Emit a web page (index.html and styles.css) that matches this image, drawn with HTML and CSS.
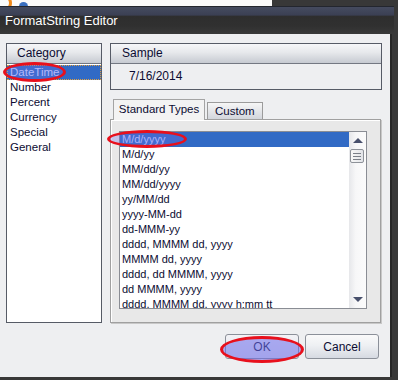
FILE: index.html
```html
<!DOCTYPE html>
<html lang="en">
<head>
    <meta charset="UTF-8">
    <title>FormatString Editor</title>
    <link rel="stylesheet" href="styles.css">
</head>
<body>
    <div class="desktop-strip">
        <div class="behind-window">
            <span class="behind-logo"></span>
            <span class="behind-dot"></span>
            <span class="behind-text">Next Connection at in a.a Software</span>
        </div>
    </div>

    <div class="window">
        <div class="title-bar">FormatString Editor</div>

        <div class="window-body">
            <div class="main-grid">
                <div class="panel category-panel">
                    <div class="panel-header">Category</div>
                    <ul class="category-list">
                        <li class="selected">DateTime</li>
                        <li>Number</li>
                        <li>Percent</li>
                        <li>Currency</li>
                        <li>Special</li>
                        <li>General</li>
                    </ul>
                </div>

                <div class="right-column">
                    <div class="panel sample-panel">
                        <div class="panel-header">Sample</div>
                        <div class="sample-value">7/16/2014</div>
                    </div>

                    <div class="tabs">
                        <div class="tab active">Standard Types</div>
                        <div class="tab">Custom</div>
                    </div>

                    <div class="tab-panel">
                        <div class="format-list">
                            <ul class="format-items">
                                <li class="selected">M/d/yyyy</li>
                                <li>M/d/yy</li>
                                <li>MM/dd/yy</li>
                                <li>MM/dd/yyyy</li>
                                <li>yy/MM/dd</li>
                                <li>yyyy-MM-dd</li>
                                <li>dd-MMM-yy</li>
                                <li>dddd, MMMM dd, yyyy</li>
                                <li>MMMM dd, yyyy</li>
                                <li>dddd, dd MMMM, yyyy</li>
                                <li>dd MMMM, yyyy</li>
                                <li>dddd, MMMM dd, yyyy h:mm tt</li>
                            </ul>
                            <div class="scrollbar">
                                <div class="scroll-btn"><span class="arrow-up"></span></div>
                                <div class="scroll-thumb">
                                    <span></span><span></span><span></span>
                                </div>
                                <div class="scroll-track"></div>
                                <div class="scroll-btn"><span class="arrow-down"></span></div>
                            </div>
                        </div>
                    </div>
                </div>
            </div>

            <div class="actions">
                <button class="btn btn-ok">OK</button>
                <button class="btn">Cancel</button>
            </div>
        </div>

        <!-- red marker rings drawn over the screenshot -->
        <div class="marker marker-category"></div>
        <div class="marker marker-format"></div>
        <div class="marker marker-ok"></div>
    </div>
</body>
</html>
```

FILE: styles.css
```css
body {
    margin: 0;
    width: 398px;
    height: 380px;
    overflow: hidden;
    background-color: #383838;
    font-family: 'Liberation Sans', Arial, sans-serif;
    font-size: 11px;
    color: #0c0c32;
}
ul {
    list-style: none;
    margin: 0;
    padding: 0;
}

/* bit of the window behind the dialog */
.desktop-strip {
    height: 6px;
    overflow: hidden;
}
.behind-window {
    position: relative;
    width: 272px;
    height: 6px;
    background-color: #fbfbfb;
    overflow: hidden;
}
.behind-logo {
    position: absolute;
    left: -6px;
    top: -6px;
    width: 12px;
    height: 12px;
    border: 3px solid #f08a1c;
    border-radius: 50%;
}
.behind-dot {
    position: absolute;
    left: 19px;
    top: 2px;
    width: 9px;
    height: 9px;
    border-radius: 50%;
    background-color: #3a6fc0;
}
.behind-text {
    position: absolute;
    left: 40px;
    top: -10px;
    font-size: 11px;
    color: #a8a8a8;
    white-space: nowrap;
}

.window {
    position: relative;
    width: 394px;
}
.title-bar {
    height: 28px;
    line-height: 28px;
    padding-left: 5px;
    box-sizing: border-box;
    border-top: 1px solid #23262e;
    background: linear-gradient(to bottom, #454b5f 0%, #3b4054 30%, #2e2e2e 34%, #303030 70%, #393939 100%);
    color: #fff;
    font-size: 13px;
}
.window-body {
    width: 392px;
    height: 343px;
    box-sizing: border-box;
    padding: 9px 10px 0 6px;
    border-right: 2px solid #262626;
    background-color: #eeeff1;
}

.main-grid {
    display: grid;
    grid-template-columns: 96px 272px;
    column-gap: 8px;
    height: 280px;
}
.panel {
    border: 1px solid #565b66;
    background-color: #fff;
    box-sizing: border-box;
}
.panel-header {
    height: 19px;
    line-height: 19px;
    border-bottom: 1px solid #737882;
    background: linear-gradient(to bottom, #f6f7f9, #e6e8eb 45%, #c6cad1);
    font-size: 12px;
    padding-left: 10px;
}
.category-list {
    padding-top: 1px;
}
.category-list li {
    height: 15px;
    line-height: 15px;
    padding-left: 3px;
    font-size: 11.5px;
}
.category-list li.selected {
    background-color: #316ac5;
    outline: 1px dotted #e0a040;
    outline-offset: -1px;
    color: #d3d8ff;
}

.right-column {
    display: flex;
    flex-direction: column;
}
.sample-panel {
    height: 47px;
    background-color: #eeeff1;
}
.sample-panel .panel-header {
    padding-left: 11px;
}
.sample-value {
    height: 25px;
    line-height: 25px;
    padding-left: 18px;
    font-size: 12px;
}

.tabs {
    display: flex;
    align-items: flex-end;
    gap: 2px;
    height: 20px;
    margin-top: 9px;
    padding-left: 3px;
}
.tab {
    height: 17px;
    line-height: 16px;
    box-sizing: border-box;
    padding: 0 7px;
    border: 1px solid #9b9b9b;
    border-bottom: none;
    background: linear-gradient(to bottom, #f6f6f6, #d3d6dc);
    font-size: 11.5px;
    white-space: nowrap;
}
.tab.active {
    width: 92px;
    height: 21px;
    line-height: 19px;
    padding: 0;
    margin-bottom: -1px;
    position: relative;
    background: #f3f3f3;
    border-color: #a4a4a4;
    text-align: center;
}

.tab-panel {
    flex: 1;
    width: 271px;
    box-sizing: border-box;
    padding: 11px 13px 13px 8px;
    border: 1px solid #a0a0a0;
    box-shadow: inset 1px 1px 0 #fff, 1px 1px 0 #c8c8c8;
    background-color: #e8e8e8;
}
.format-list {
    display: flex;
    height: 178px;
    box-sizing: border-box;
    border: 1px solid #8a8d94;
    background-color: #fff;
    overflow: hidden;
}
.format-items {
    flex: 1;
    overflow: hidden;
}
.format-items li {
    height: 15px;
    line-height: 15px;
    padding-left: 2px;
    white-space: nowrap;
}
.format-items li.selected {
    background-color: #316ac5;
    color: #c9d0ff;
}

.scrollbar {
    width: 17px;
    display: flex;
    flex-direction: column;
    background: linear-gradient(to right, #e6e7ea, #f7f7f8 40%, #fbfbfb);
}
.scroll-btn {
    height: 17px;
    display: flex;
    align-items: center;
    justify-content: center;
}
.arrow-up,
.arrow-down {
    width: 0;
    height: 0;
    border-left: 5px solid transparent;
    border-right: 5px solid transparent;
}
.arrow-up {
    border-bottom: 5px solid #48506c;
}
.arrow-down {
    border-top: 5px solid #48506c;
}
.scroll-thumb {
    height: 14px;
    margin: 0 2px 0 1px;
    box-sizing: border-box;
    border: 1px solid #8e9299;
    border-radius: 2px;
    background: linear-gradient(to right, #f7f7f7, #e2e4e8);
    display: flex;
    flex-direction: column;
    justify-content: center;
    align-items: center;
    gap: 2px;
}
.scroll-thumb span {
    width: 8px;
    height: 1px;
    background-color: #7a7f88;
}
.scroll-track {
    flex: 1;
}

.actions {
    display: flex;
    justify-content: flex-end;
    gap: 6px;
    margin-top: 11px;
    margin-right: 1px;
}
.btn {
    width: 74px;
    height: 25px;
    border: 1px solid #8b9099;
    border-radius: 3px;
    background: linear-gradient(to bottom, #fafafa, #eef0f3 45%, #d6dae2);
    font-family: 'Liberation Sans', Arial, sans-serif;
    font-size: 12px;
    color: #0c0c32;
    padding: 0;
}
.btn-ok {
    background: linear-gradient(to bottom, #f2f2f6, #e4e6ee);
}

.marker {
    position: absolute;
    border: 3px solid #e8101c;
    border-radius: 50%;
    box-sizing: border-box;
    background-color: rgba(110, 110, 235, 0.3);
}
.marker-category {
    left: 3px;
    top: 56px;
    width: 63px;
    height: 20px;
}
.marker-format {
    left: 107px;
    top: 124px;
    width: 80px;
    height: 18px;
}
.marker-ok {
    left: 220px;
    top: 330px;
    width: 84px;
    height: 27px;
    background-color: rgba(110, 110, 235, 0.55);
}
```
